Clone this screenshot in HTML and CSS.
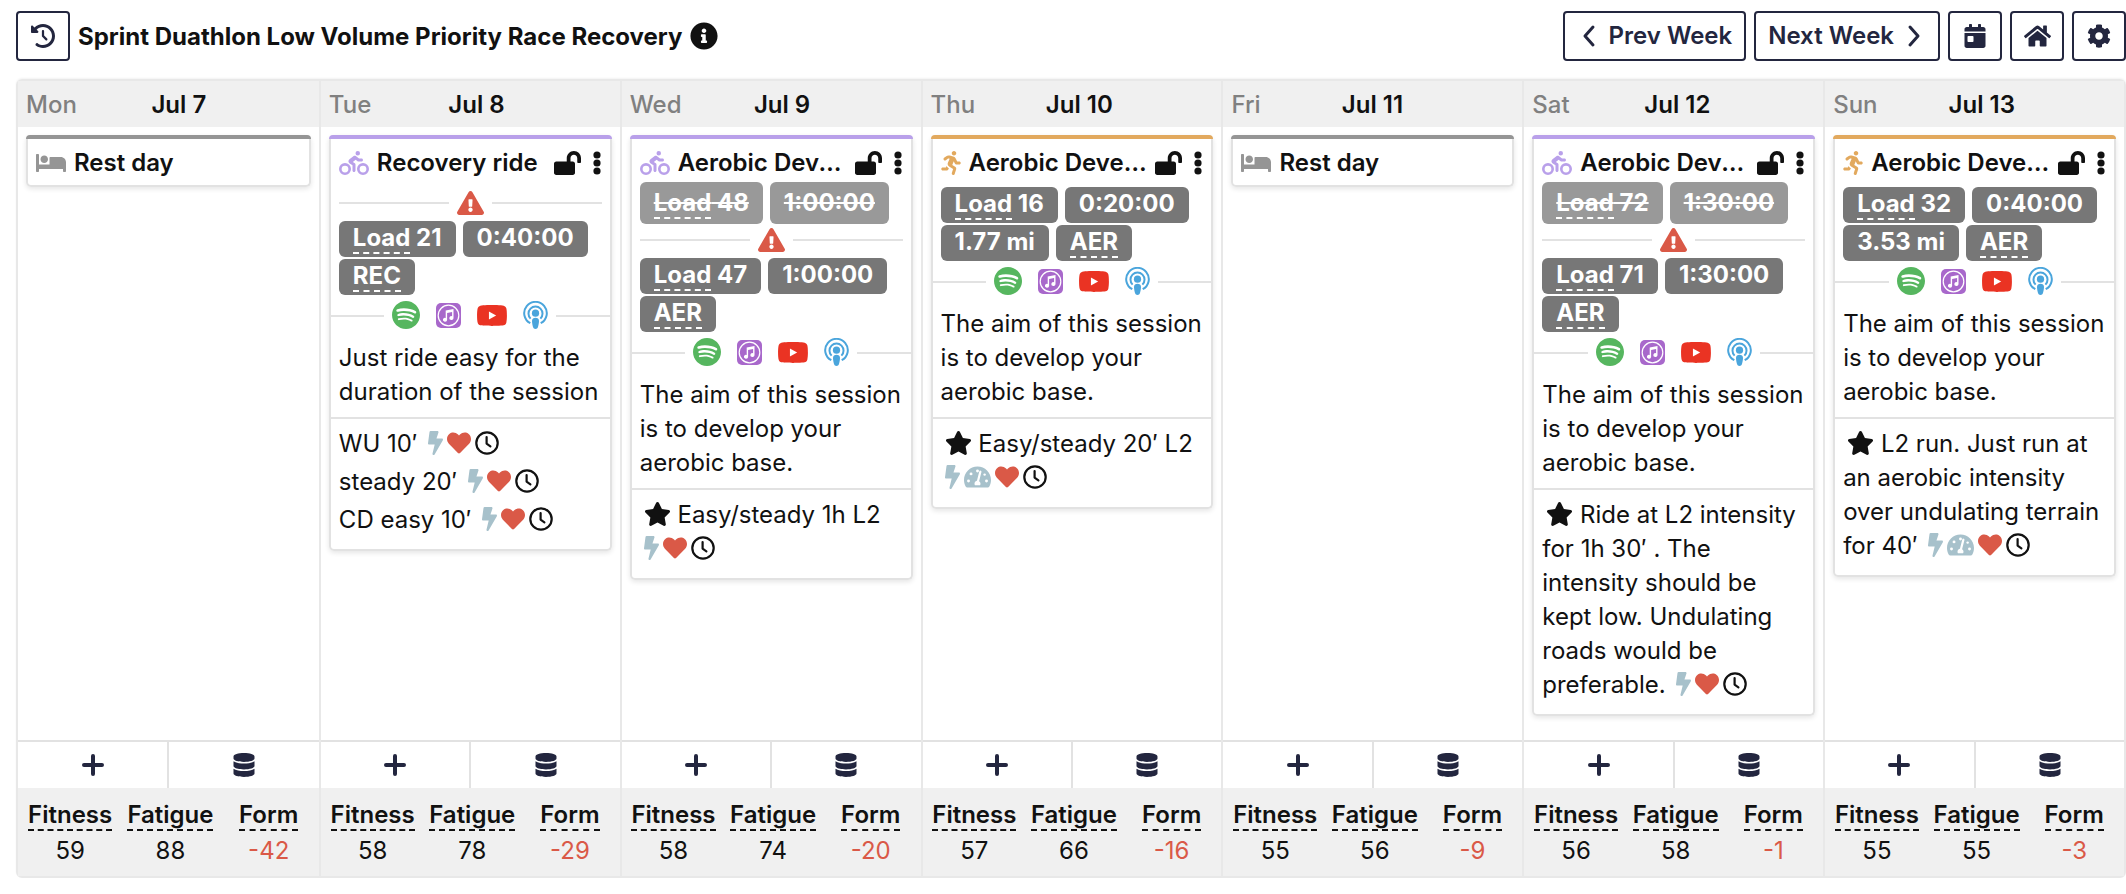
FILE: index.html
```html
<!DOCTYPE html>
<html lang="en">
<head>
    <meta charset="utf-8">
    <title>Training Week</title>
    <link rel="stylesheet" href="styles.css">
</head>
<body>
    <!-- icon sprite -->
    <svg class="sprite" aria-hidden="true">
        <symbol id="history" viewBox="0 0 512 512"><path d="M75 75L41 41C25.900 25.900 0 36.600 0 57.900V168c0 13.300 10.700 24 24 24H134.100c21.400 0 32.100-25.900 17-41l-30.800-30.800C155 85.500 203 64 256 64c106 0 192 86 192 192s-86 192-192 192c-40.800 0-78.600-12.700-109.700-34.400c-14.500-10.100-34.400-6.600-44.600 7.900s-6.600 34.400 7.900 44.600C151.200 495 201.700 512 256 512c141.400 0 256-114.600 256-256S397.400 0 256 0C185.300 0 121.300 28.700 75 75zm181 53c-13.300 0-24 10.700-24 24V256c0 6.400 2.500 12.500 7 17l72 72c9.400 9.400 24.600 9.400 33.900 0s9.400-24.600 0-33.900l-65-65V152c0-13.300-10.700-24-24-24z"/></symbol>
        <symbol id="info" viewBox="0 0 512 512"><path d="M256 8C119 8 8 119 8 256c0 137 111 248 248 248s248-111 248-248C504 119 393 8 256 8zm0 110c23.200 0 42 18.800 42 42s-18.800 42-42 42-42-18.800-42-42 18.800-42 42-42zm56 254c0 6.600-5.400 12-12 12h-88c-6.600 0-12-5.400-12-12v-24c0-6.600 5.400-12 12-12h12v-64h-12c-6.600 0-12-5.400-12-12v-24c0-6.600 5.400-12 12-12h64c6.600 0 12 5.400 12 12v100h12c6.600 0 12 5.400 12 12v24z"/></symbol>
        <symbol id="left" viewBox="0 0 24 24"><path d="M16 3L8 12l8 9" fill="none" stroke="currentColor" stroke-width="3" stroke-linecap="round" stroke-linejoin="round"/></symbol>
        <symbol id="right" viewBox="0 0 24 24"><path d="M8 3l8 9-8 9" fill="none" stroke="currentColor" stroke-width="3" stroke-linecap="round" stroke-linejoin="round"/></symbol>
        <symbol id="calendar" viewBox="0 0 448 512"><path d="M0 464c0 26.500 21.500 48 48 48h352c26.500 0 48-21.500 48-48V192H0v272zm64-192c0-8.800 7.200-16 16-16h96c8.800 0 16 7.200 16 16v96c0 8.800-7.200 16-16 16H80c-8.800 0-16-7.200-16-16v-96zM400 64h-48V16c0-8.800-7.200-16-16-16h-32c-8.800 0-16 7.200-16 16v48H160V16c0-8.800-7.200-16-16-16h-32c-8.800 0-16 7.200-16 16v48H48C21.500 64 0 85.500 0 112v48h448v-48c0-26.500-21.500-48-48-48z"/></symbol>
        <symbol id="home" viewBox="0 0 576 512"><path d="M280.370 148.260L96 300.110V464a16 16 0 0 0 16 16l112.060-.29a16 16 0 0 0 15.920-16V368a16 16 0 0 1 16-16h64a16 16 0 0 1 16 16v95.640a16 16 0 0 0 16 16.050L464 480a16 16 0 0 0 16-16V300L295.670 148.260a12.190 12.190 0 0 0-15.300 0zM571.600 251.470L488 182.560V44.050a12 12 0 0 0-12-12h-56a12 12 0 0 0-12 12v72.610L318.470 43a48 48 0 0 0-61 0L4.340 251.470a12 12 0 0 0-1.600 16.900l25.500 31A12 12 0 0 0 45.150 301l235.220-193.740a12.190 12.190 0 0 1 15.300 0L530.900 301a12 12 0 0 0 16.900-1.600l25.500-31a12 12 0 0 0-1.700-16.930z"/></symbol>
        <symbol id="cog" viewBox="0 0 512 512"><path d="M487.400 315.700l-42.600-24.600c4.300-23.200 4.300-47 0-70.200l42.600-24.600c4.900-2.800 7.100-8.600 5.500-14-11.100-35.600-30-67.800-54.700-94.600-3.800-4.100-10-5.100-14.800-2.300L380.800 110c-17.900-15.400-38.500-27.300-60.800-35.100V25.800c0-5.600-3.900-10.500-9.400-11.700-36.700-8.200-74.300-7.800-109.200 0-5.500 1.200-9.400 6.100-9.400 11.700V75c-22.200 7.900-42.800 19.800-60.800 35.100L88.700 85.500c-4.900-2.800-11-1.900-14.800 2.300-24.700 26.700-43.600 58.900-54.700 94.600-1.700 5.400.6 11.200 5.500 14L67.300 221c-4.300 23.200-4.300 47 0 70.200l-42.600 24.600c-4.900 2.800-7.100 8.600-5.500 14 11.100 35.600 30 67.800 54.700 94.600 3.800 4.100 10 5.100 14.800 2.300l42.600-24.600c17.900 15.400 38.500 27.300 60.800 35.100v49.200c0 5.600 3.900 10.500 9.400 11.700 36.700 8.200 74.300 7.800 109.200 0 5.500-1.200 9.400-6.100 9.400-11.700v-49.200c22.200-7.900 42.800-19.800 60.800-35.100l42.600 24.600c4.900 2.800 11 1.900 14.800-2.300 24.700-26.700 43.600-58.900 54.700-94.600 1.500-5.500-.7-11.300-5.600-14.100zM256 336c-44.100 0-80-35.900-80-80s35.900-80 80-80 80 35.900 80 80-35.900 80-80 80z"/></symbol>
        <symbol id="bed" viewBox="0 0 640 512"><path d="M176 256c44.110 0 80-35.890 80-80s-35.890-80-80-80-80 35.890-80 80 35.890 80 80 80zm352-128H304c-8.840 0-16 7.160-16 16v144H64V80c0-8.840-7.160-16-16-16H16C7.160 64 0 71.160 0 80v352c0 8.840 7.160 16 16 16h32c8.840 0 16-7.160 16-16v-48h512v48c0 8.840 7.160 16 16 16h32c8.840 0 16-7.160 16-16V240c0-61.860-50.140-112-112-112z"/></symbol>
        <symbol id="bike" viewBox="0 0 640 512"><path d="M400 96a48 48 0 1 0 0-96 48 48 0 1 0 0 96zm27.200 64l-61.800-48.800c-17.300-13.600-41.700-13.800-59.100-.3l-83.100 64.200c-30.700 23.800-28.500 70.800 4.300 91.600L288 305.100V416c0 17.700 14.300 32 32 32s32-14.300 32-32V288c0-10.700-5.300-20.700-14.200-26.600L295 232.900l60.300-48.500L396 217c5.700 4.500 12.700 7 20 7h64c17.700 0 32-14.300 32-32s-14.300-32-32-32H427.200zM56 384a72 72 0 1 1 144 0A72 72 0 1 1 56 384zm200 0A128 128 0 1 0 0 384a128 128 0 1 0 256 0zm184 0a72 72 0 1 1 144 0 72 72 0 1 1 -144 0zm200 0a128 128 0 1 0 -256 0 128 128 0 1 0 256 0z"/></symbol>
        <symbol id="run" viewBox="0 0 416 512"><path d="M272 96c26.510 0 48-21.490 48-48S298.510 0 272 0s-48 21.490-48 48 21.490 48 48 48zM113.690 317.470l-14.800 34.520H32c-17.670 0-32 14.330-32 32s14.330 32 32 32h77.450c19.250 0 36.580-11.440 44.110-29.090l8.790-20.520-10.670-6.300c-17.320-10.230-30.060-25.370-37.990-42.610zM384 223.990h-44.030l-26.060-53.250c-12.500-25.550-35.450-44.230-61.780-50.940l-71.080-21.140c-28.300-6.800-57.770-.55-80.840 17.140l-39.670 30.410c-14.030 10.750-16.690 30.830-5.940 44.860s30.840 16.660 44.860 5.910l39.690-30.410c7.670-5.890 17.440-8 25.270-6.140l14.700 4.370-37.460 87.390c-12.620 29.480-1.310 64.010 26.300 80.310l84.980 50.170-27.470 87.730c-5.280 16.860 4.110 34.820 20.970 40.090 3.190 1 6.410 1.480 9.580 1.480 13.610 0 26.230-8.770 30.520-22.450l31.640-101.060c5.910-20.770-2.890-43.080-21.640-54.390l-61.240-36.140 31.310-78.280 20.270 41.430c8 16.340 24.920 26.890 43.110 26.890H384c17.670 0 32-14.330 32-32s-14.330-31.990-32-31.990z"/></symbol>
        <symbol id="unlock" viewBox="0 0 576 512"><path d="M423.500 0C339.500.3 272 69.500 272 153.500V224H48c-26.500 0-48 21.500-48 48v192c0 26.500 21.500 48 48 48h352c26.500 0 48-21.500 48-48V272c0-26.500-21.500-48-48-48h-48v-71.100c0-39.600 31.700-72.500 71.300-72.900 40-.4 72.700 32.100 72.700 72v80c0 13.300 10.700 24 24 24h32c13.300 0 24-10.700 24-24v-80C576 68 507.500-.3 423.500 0z"/></symbol>
        <symbol id="dots" viewBox="0 0 8 24"><circle cx="4" cy="4" r="3.600"/><circle cx="4" cy="12" r="3.600"/><circle cx="4" cy="20" r="3.600"/></symbol>
        <symbol id="warning" viewBox="0 0 576 512"><path d="M569.500 440C588 472 564.800 512 527.900 512H48c-36.900 0-60-40-41.500-72L246.400 24c18.500-32 64.700-32 83.200 0l239.900 416zM288 354c-25.400 0-46 20.600-46 46s20.600 46 46 46 46-20.600 46-46-20.600-46-46-46zm-43.700-165.300l7.400 136c.4 6.300 5.700 11.300 12 11.300h48.600c6.400 0 11.600-5 12-11.300l7.400-136c.4-6.900-5.100-12.700-12-12.700h-63.400c-6.900 0-12.300 5.800-12 12.700z"/></symbol>
        <symbol id="spotify" viewBox="0 8 496 496"><path d="M248 8C111.100 8 0 119.100 0 256s111.100 248 248 248 248-111.100 248-248S384.900 8 248 8zm100.700 364.900c-4.200 0-6.800-1.300-10.700-3.600-62.400-37.600-135-39.200-206.700-24.500-3.900 1-9 2.600-11.900 2.600-9.700 0-15.800-7.700-15.800-15.800 0-10.300 6.100-15.200 13.600-16.800 81.900-18.100 165.600-16.500 237 26.200 6.100 3.900 9.700 7.400 9.700 16.500s-7.100 15.400-15.200 15.400zm26.900-65.600c-5.200 0-8.700-2.300-12.300-4.200-62.500-37-155.700-51.900-238.600-29.400-4.800 1.300-7.400 2.600-11.900 2.600-10.700 0-19.400-8.700-19.400-19.400s5.200-17.800 15.500-20.700c27.800-7.800 56.200-13.600 97.800-13.600 64.900 0 127.600 16.100 177 45.500 8.100 4.800 11.300 11 11.300 19.700-.1 10.800-8.500 19.500-19.400 19.500zm31-76.200c-5.200 0-8.400-1.300-12.900-3.900-71.200-42.500-198.500-52.700-280.900-29.700-3.600 1-8.100 2.600-12.900 2.600-13.200 0-23.300-10.300-23.300-23.600 0-13.600 8.400-21.300 17.400-23.900 35.200-10.300 74.600-15.200 117.500-15.200 73 0 149.500 15.200 205.400 47.800 7.800 4.500 12.900 10.700 12.900 22.600 0 13.600-11 23.300-23.200 23.300z"/></symbol>
        <symbol id="itunes" viewBox="0 0 25 25"><rect width="25" height="25" rx="5"/><circle cx="12.500" cy="12.500" r="10.300" fill="none" stroke="#fff" stroke-width="1.200"/><path d="M9.700 7.600l7.800-1.700v9.300a2.100 1.900 0 1 1-1.400-1.900V9l-5 1.100v6.800a2.100 1.900 0 1 1-1.400-1.900z" fill="#fff"/></symbol>
        <symbol id="youtube" viewBox="15 64 546 384"><path d="M549.700 124c-6.300-23.600-24.800-42.200-48.300-48.500C458.800 64 288 64 288 64S117.200 64 74.600 75.500C51.100 81.800 32.600 100.400 26.300 124c-11.400 43-11.400 132.400-11.400 132.400s0 89.400 11.400 132.300c6.300 23.600 24.800 41.500 48.300 47.800C117.200 448 288 448 288 448s170.800 0 213.400-11.500c23.500-6.300 42-24.200 48.300-47.800 11.400-42.900 11.400-132.300 11.400-132.300s0-89.400-11.400-132.400z"/><path d="M232 182l132 74-132 74z" fill="#fff"/></symbol>
        <symbol id="podcast" viewBox="0 0 25 28"><circle cx="12.500" cy="12.200" r="3.600"/><path d="M9 20c0-2.500 1.500-3.200 3.500-3.200s3.500.7 3.500 3.200c0 2-.6 4.500-1 6-.3 1.300-1.300 2-2.500 2s-2.200-.7-2.500-2c-.4-1.500-1-4-1-6z"/><path d="M7.600 17.600a7 7 0 1 1 9.800 0M7.300 22.200a11.300 11.300 0 1 1 10.400 0" fill="none" stroke="currentColor" stroke-width="2"/></symbol>
        <symbol id="bolt" viewBox="0 0 320 512"><path d="M296 160H180.600l42.600-129.800C227.200 15 215.700 0 200 0H56C44 0 33.800 8.900 32.200 20.800l-32 240C-1.700 275.200 9.500 288 24 288h118.700L96.600 482.500c-3.600 15.200 8 29.500 23.300 29.500 8.400 0 16.400-4.400 20.800-12l176-304c9.300-15.900-2.200-36-20.700-36z"/></symbol>
        <symbol id="heart" viewBox="0 0 512 512"><path d="M462.300 62.600C407.500 15.900 326 24.300 275.700 76.200L256 96.500l-19.700-20.300C186.100 24.300 104.500 15.900 49.700 62.600c-62.800 53.600-66.100 149.800-9.900 207.900l193.500 199.800c12.500 12.900 32.800 12.900 45.300 0l193.500-199.800c56.300-58.100 53-154.300-9.800-207.900z"/></symbol>
        <symbol id="clock" viewBox="0 0 24 24"><circle cx="12" cy="12" r="10.700" fill="none" stroke="currentColor" stroke-width="2.200"/><path d="M11.600 6v6.600l3.800 2.700" fill="none" stroke="currentColor" stroke-width="2.200" stroke-linecap="round" stroke-linejoin="round"/></symbol>
        <symbol id="gauge" viewBox="0 0 576 512"><path d="M288 32C129 32 0 161 0 320c0 52.800 14.200 102.300 39 144.800 5.700 9.600 16.400 15.200 27.500 15.200h443c11.100 0 21.800-5.600 27.400-15.200C561.800 422.300 576 372.800 576 320c0-159-129-288-288-288z"/><g fill="#fff"><circle cx="288" cy="128" r="31"/><circle cx="150" cy="190" r="31"/><circle cx="96" cy="340" r="31"/><circle cx="480" cy="340" r="31"/><circle cx="440" cy="205" r="26"/><path d="M356 120c13 4 20 17 16 30l-50 196c18 12 30 30 30 54 0 13-3 24-9 32H233c-6-8-9-19-9-32 0-36 24-62 52-64l50-198c4-13 17-22 30-18z"/></g></symbol>
        <symbol id="star" viewBox="0 0 576 512"><path d="M259.300 17.800L194 150.200 47.900 171.500c-26.200 3.800-36.700 36.100-17.700 54.600l105.700 103-25 145.500c-4.500 26.300 23.200 46 46.400 33.700L288 439.600l130.700 68.700c23.200 12.200 50.900-7.400 46.400-33.700l-25-145.500 105.700-103c19-18.500 8.500-50.800-17.700-54.600L382 150.200 316.700 17.800c-11.700-23.600-45.600-23.900-57.400 0z"/></symbol>
        <symbol id="plus" viewBox="0 0 24 24"><path d="M12 3v18M3 12h18" fill="none" stroke="currentColor" stroke-width="4" stroke-linecap="round"/></symbol>
        <symbol id="database" viewBox="0 0 448 512"><path d="M448 73.100v45.800C448 159.100 347.700 192 224 192S0 159.100 0 118.900V73.100C0 32.900 100.300 0 224 0s224 32.900 224 73.100zM448 176v102.900C448 319.100 347.700 352 224 352S0 319.100 0 278.900V176c48.100 33.100 136.200 48.600 224 48.600S399.900 209.100 448 176zm0 160v102.900C448 479.100 347.700 512 224 512S0 479.100 0 438.900V336c48.100 33.100 136.200 48.600 224 48.600S399.900 369.100 448 336z"/></symbol>
    </svg>

    <header class="toolbar">
        <button class="btn square" aria-label="History"><svg class="icon"><use href="#history"/></svg></button>
        <h1>Sprint Duathlon Low Volume Priority Race Recovery</h1>
        <svg class="icon info"><use href="#info"/></svg>
        <div class="actions">
            <button class="btn"><svg class="icon"><use href="#left"/></svg>Prev Week</button>
            <button class="btn">Next Week<svg class="icon"><use href="#right"/></svg></button>
            <button class="btn square" aria-label="Today"><svg class="icon"><use href="#calendar"/></svg></button>
            <button class="btn square" aria-label="Home"><svg class="icon wide"><use href="#home"/></svg></button>
            <button class="btn square" aria-label="Settings"><svg class="icon"><use href="#cog"/></svg></button>
        </div>
    </header>

    <main class="week">
        <section class="day">
            <div class="day-header"><span class="weekday">Mon</span><span class="date">Jul 7</span></div>
            <div class="day-body">
                <article class="card rest">
                    <div class="card-title"><svg class="sport"><use href="#bed"/></svg><h2>Rest day</h2></div>
                </article>
            </div>
            <div class="day-actions">
                <button aria-label="Add"><svg class="icon"><use href="#plus"/></svg></button>
                <button aria-label="Data"><svg class="icon"><use href="#database"/></svg></button>
            </div>
            <dl class="stats">
                <div><dt><abbr>Fitness</abbr></dt><dd>59</dd></div>
                <div><dt><abbr>Fatigue</abbr></dt><dd>88</dd></div>
                <div><dt><abbr>Form</abbr></dt><dd class="negative">-42</dd></div>
            </dl>
        </section>

        <section class="day">
            <div class="day-header"><span class="weekday">Tue</span><span class="date">Jul 8</span></div>
            <div class="day-body">
                <article class="card bike">
                    <div class="card-title">
                        <svg class="sport"><use href="#bike"/></svg><h2>Recovery ride</h2>
                        <button class="lock" aria-label="Unlocked"><svg><use href="#unlock"/></svg></button>
                        <button class="more" aria-label="More"><svg><use href="#dots"/></svg></button>
                    </div>
                    <div class="meta">
                        <div class="warn"><svg><use href="#warning"/></svg></div>
                        <div class="badges"><span class="badge"><abbr>Load</abbr> 21</span><span class="badge">0:40:00</span><span class="badge"><abbr>REC</abbr></span></div>
                    </div>
                    <div class="media">
                        <a href="#" class="spotify" aria-label="Spotify"><svg><use href="#spotify"/></svg></a>
                        <a href="#" class="itunes" aria-label="iTunes"><svg><use href="#itunes"/></svg></a>
                        <a href="#" class="youtube" aria-label="YouTube"><svg><use href="#youtube"/></svg></a>
                        <a href="#" class="podcast" aria-label="Podcasts"><svg><use href="#podcast"/></svg></a>
                    </div>
                    <p class="description">Just ride easy for the duration of the session</p>
                    <ul class="steps">
                        <li>WU 10′ <span class="targets"><svg class="bolt"><use href="#bolt"/></svg><svg class="heart"><use href="#heart"/></svg><svg class="clock"><use href="#clock"/></svg></span></li>
                        <li>steady 20′ <span class="targets"><svg class="bolt"><use href="#bolt"/></svg><svg class="heart"><use href="#heart"/></svg><svg class="clock"><use href="#clock"/></svg></span></li>
                        <li>CD easy 10′ <span class="targets"><svg class="bolt"><use href="#bolt"/></svg><svg class="heart"><use href="#heart"/></svg><svg class="clock"><use href="#clock"/></svg></span></li>
                    </ul>
                </article>
            </div>
            <div class="day-actions">
                <button aria-label="Add"><svg class="icon"><use href="#plus"/></svg></button>
                <button aria-label="Data"><svg class="icon"><use href="#database"/></svg></button>
            </div>
            <dl class="stats">
                <div><dt><abbr>Fitness</abbr></dt><dd>58</dd></div>
                <div><dt><abbr>Fatigue</abbr></dt><dd>78</dd></div>
                <div><dt><abbr>Form</abbr></dt><dd class="negative">-29</dd></div>
            </dl>
        </section>

        <section class="day">
            <div class="day-header"><span class="weekday">Wed</span><span class="date">Jul 9</span></div>
            <div class="day-body">
                <article class="card bike">
                    <div class="card-title">
                        <svg class="sport"><use href="#bike"/></svg><h2>Aerobic Development</h2>
                        <button class="lock" aria-label="Unlocked"><svg><use href="#unlock"/></svg></button>
                        <button class="more" aria-label="More"><svg><use href="#dots"/></svg></button>
                    </div>
                    <div class="meta changed">
                        <div class="badges old"><span class="badge"><abbr>Load</abbr> 48</span><span class="badge">1:00:00</span></div>
                        <div class="warn"><svg><use href="#warning"/></svg></div>
                        <div class="badges"><span class="badge"><abbr>Load</abbr> 47</span><span class="badge">1:00:00</span><span class="badge"><abbr>AER</abbr></span></div>
                    </div>
                    <div class="media">
                        <a href="#" class="spotify" aria-label="Spotify"><svg><use href="#spotify"/></svg></a>
                        <a href="#" class="itunes" aria-label="iTunes"><svg><use href="#itunes"/></svg></a>
                        <a href="#" class="youtube" aria-label="YouTube"><svg><use href="#youtube"/></svg></a>
                        <a href="#" class="podcast" aria-label="Podcasts"><svg><use href="#podcast"/></svg></a>
                    </div>
                    <p class="description">The aim of this session is to develop your aerobic base.</p>
                    <ul class="steps">
                        <li><svg class="star"><use href="#star"/></svg> Easy/steady 1h L2 <span class="targets"><svg class="bolt"><use href="#bolt"/></svg><svg class="heart"><use href="#heart"/></svg><svg class="clock"><use href="#clock"/></svg></span></li>
                    </ul>
                </article>
            </div>
            <div class="day-actions">
                <button aria-label="Add"><svg class="icon"><use href="#plus"/></svg></button>
                <button aria-label="Data"><svg class="icon"><use href="#database"/></svg></button>
            </div>
            <dl class="stats">
                <div><dt><abbr>Fitness</abbr></dt><dd>58</dd></div>
                <div><dt><abbr>Fatigue</abbr></dt><dd>74</dd></div>
                <div><dt><abbr>Form</abbr></dt><dd class="negative">-20</dd></div>
            </dl>
        </section>

        <section class="day">
            <div class="day-header"><span class="weekday">Thu</span><span class="date">Jul 10</span></div>
            <div class="day-body">
                <article class="card run">
                    <div class="card-title">
                        <svg class="sport"><use href="#run"/></svg><h2>Aerobic Development</h2>
                        <button class="lock" aria-label="Unlocked"><svg><use href="#unlock"/></svg></button>
                        <button class="more" aria-label="More"><svg><use href="#dots"/></svg></button>
                    </div>
                    <div class="meta">
                        <div class="badges"><span class="badge"><abbr>Load</abbr> 16</span><span class="badge">0:20:00</span><span class="badge">1.77 mi</span><span class="badge"><abbr>AER</abbr></span></div>
                    </div>
                    <div class="media">
                        <a href="#" class="spotify" aria-label="Spotify"><svg><use href="#spotify"/></svg></a>
                        <a href="#" class="itunes" aria-label="iTunes"><svg><use href="#itunes"/></svg></a>
                        <a href="#" class="youtube" aria-label="YouTube"><svg><use href="#youtube"/></svg></a>
                        <a href="#" class="podcast" aria-label="Podcasts"><svg><use href="#podcast"/></svg></a>
                    </div>
                    <p class="description">The aim of this session is to develop your aerobic base.</p>
                    <ul class="steps">
                        <li><svg class="star"><use href="#star"/></svg> Easy/steady 20′ L2 <span class="targets"><svg class="bolt"><use href="#bolt"/></svg><svg class="gauge"><use href="#gauge"/></svg><svg class="heart"><use href="#heart"/></svg><svg class="clock"><use href="#clock"/></svg></span></li>
                    </ul>
                </article>
            </div>
            <div class="day-actions">
                <button aria-label="Add"><svg class="icon"><use href="#plus"/></svg></button>
                <button aria-label="Data"><svg class="icon"><use href="#database"/></svg></button>
            </div>
            <dl class="stats">
                <div><dt><abbr>Fitness</abbr></dt><dd>57</dd></div>
                <div><dt><abbr>Fatigue</abbr></dt><dd>66</dd></div>
                <div><dt><abbr>Form</abbr></dt><dd class="negative">-16</dd></div>
            </dl>
        </section>

        <section class="day">
            <div class="day-header"><span class="weekday">Fri</span><span class="date">Jul 11</span></div>
            <div class="day-body">
                <article class="card rest">
                    <div class="card-title"><svg class="sport"><use href="#bed"/></svg><h2>Rest day</h2></div>
                </article>
            </div>
            <div class="day-actions">
                <button aria-label="Add"><svg class="icon"><use href="#plus"/></svg></button>
                <button aria-label="Data"><svg class="icon"><use href="#database"/></svg></button>
            </div>
            <dl class="stats">
                <div><dt><abbr>Fitness</abbr></dt><dd>55</dd></div>
                <div><dt><abbr>Fatigue</abbr></dt><dd>56</dd></div>
                <div><dt><abbr>Form</abbr></dt><dd class="negative">-9</dd></div>
            </dl>
        </section>

        <section class="day">
            <div class="day-header"><span class="weekday">Sat</span><span class="date">Jul 12</span></div>
            <div class="day-body">
                <article class="card bike">
                    <div class="card-title">
                        <svg class="sport"><use href="#bike"/></svg><h2>Aerobic Development</h2>
                        <button class="lock" aria-label="Unlocked"><svg><use href="#unlock"/></svg></button>
                        <button class="more" aria-label="More"><svg><use href="#dots"/></svg></button>
                    </div>
                    <div class="meta changed">
                        <div class="badges old"><span class="badge"><abbr>Load</abbr> 72</span><span class="badge">1:30:00</span></div>
                        <div class="warn"><svg><use href="#warning"/></svg></div>
                        <div class="badges"><span class="badge"><abbr>Load</abbr> 71</span><span class="badge">1:30:00</span><span class="badge"><abbr>AER</abbr></span></div>
                    </div>
                    <div class="media">
                        <a href="#" class="spotify" aria-label="Spotify"><svg><use href="#spotify"/></svg></a>
                        <a href="#" class="itunes" aria-label="iTunes"><svg><use href="#itunes"/></svg></a>
                        <a href="#" class="youtube" aria-label="YouTube"><svg><use href="#youtube"/></svg></a>
                        <a href="#" class="podcast" aria-label="Podcasts"><svg><use href="#podcast"/></svg></a>
                    </div>
                    <p class="description">The aim of this session is to develop your aerobic base.</p>
                    <ul class="steps">
                        <li><svg class="star"><use href="#star"/></svg> Ride at L2 intensity for 1h 30′ . The intensity should be kept low. Undulating roads would be preferable. <span class="targets"><svg class="bolt"><use href="#bolt"/></svg><svg class="heart"><use href="#heart"/></svg><svg class="clock"><use href="#clock"/></svg></span></li>
                    </ul>
                </article>
            </div>
            <div class="day-actions">
                <button aria-label="Add"><svg class="icon"><use href="#plus"/></svg></button>
                <button aria-label="Data"><svg class="icon"><use href="#database"/></svg></button>
            </div>
            <dl class="stats">
                <div><dt><abbr>Fitness</abbr></dt><dd>56</dd></div>
                <div><dt><abbr>Fatigue</abbr></dt><dd>58</dd></div>
                <div><dt><abbr>Form</abbr></dt><dd class="negative">-1</dd></div>
            </dl>
        </section>

        <section class="day">
            <div class="day-header"><span class="weekday">Sun</span><span class="date">Jul 13</span></div>
            <div class="day-body">
                <article class="card run">
                    <div class="card-title">
                        <svg class="sport"><use href="#run"/></svg><h2>Aerobic Development</h2>
                        <button class="lock" aria-label="Unlocked"><svg><use href="#unlock"/></svg></button>
                        <button class="more" aria-label="More"><svg><use href="#dots"/></svg></button>
                    </div>
                    <div class="meta">
                        <div class="badges"><span class="badge"><abbr>Load</abbr> 32</span><span class="badge">0:40:00</span><span class="badge">3.53 mi</span><span class="badge"><abbr>AER</abbr></span></div>
                    </div>
                    <div class="media">
                        <a href="#" class="spotify" aria-label="Spotify"><svg><use href="#spotify"/></svg></a>
                        <a href="#" class="itunes" aria-label="iTunes"><svg><use href="#itunes"/></svg></a>
                        <a href="#" class="youtube" aria-label="YouTube"><svg><use href="#youtube"/></svg></a>
                        <a href="#" class="podcast" aria-label="Podcasts"><svg><use href="#podcast"/></svg></a>
                    </div>
                    <p class="description">The aim of this session is to develop your aerobic base.</p>
                    <ul class="steps">
                        <li><svg class="star"><use href="#star"/></svg> L2 run. Just run at an aerobic intensity over undulating terrain for 40′ <span class="targets"><svg class="bolt"><use href="#bolt"/></svg><svg class="gauge"><use href="#gauge"/></svg><svg class="heart"><use href="#heart"/></svg><svg class="clock"><use href="#clock"/></svg></span></li>
                    </ul>
                </article>
            </div>
            <div class="day-actions">
                <button aria-label="Add"><svg class="icon"><use href="#plus"/></svg></button>
                <button aria-label="Data"><svg class="icon"><use href="#database"/></svg></button>
            </div>
            <dl class="stats">
                <div><dt><abbr>Fitness</abbr></dt><dd>55</dd></div>
                <div><dt><abbr>Fatigue</abbr></dt><dd>55</dd></div>
                <div><dt><abbr>Form</abbr></dt><dd class="negative">-3</dd></div>
            </dl>
        </section>
    </main>
</body>
</html>
```
FILE: styles.css
```css
* {
    box-sizing: border-box;
}
body {
    margin: 0;
    padding: 11px 0 14px 16px;
    background: #fff;
    color: #111;
    font-family: Inter, "Liberation Sans", sans-serif;
    font-size: 24px;
    line-height: 34px;
}
h1, h2, p, ul, dl, dd {
    margin: 0;
    padding: 0;
    font-size: 24px;
}
svg {
    fill: currentColor;
}
button {
    padding: 0;
    border: none;
    background: none;
    color: inherit;
    font: inherit;
    cursor: pointer;
}
.sprite {
    display: none;
}
.icon {
    width: 24px;
    height: 24px;
}
.icon.wide {
    width: 27px;
}

/* toolbar */
.toolbar {
    display: flex;
    align-items: center;
    gap: 8px;
    margin-bottom: 18px;
}
.toolbar h1 {
    padding-top: 2px;
    font-weight: 700;
}
.info {
    width: 28px;
    height: 28px;
}
.actions {
    display: flex;
    gap: 8px;
    margin-left: auto;
}
.btn {
    display: flex;
    align-items: center;
    justify-content: center;
    gap: 8px;
    height: 50px;
    padding: 0 12px;
    border: 2px solid #23263f;
    border-radius: 4px;
    color: #23263f;
    font-weight: 600;
}
.btn.square {
    width: 54px;
    padding: 0;
}

/* week grid */
.week {
    display: grid;
    grid-template-columns: repeat(7, minmax(0, 1fr));
    border: 2px solid #e8e8e8;
    border-radius: 6px;
    box-shadow: 0 -1px 2px rgba(0, 0, 0, 0.05);
}
.day {
    display: flex;
    flex-direction: column;
}
.day + .day {
    border-left: 2px solid #e8e8e8;
}
.day-header {
    display: flex;
    align-items: center;
    height: 46px;
    padding: 2px 38px 0 8px;
    background: #f0f0f0;
}
.weekday {
    color: #808080;
    font-weight: 500;
}
.date {
    flex: 1;
    text-align: center;
    font-weight: 600;
}
.day-body {
    flex: 1;
    padding: 8px 8px 24px;
}

/* workout card */
.card {
    border: 2px solid #e2e2e2;
    border-top: none;
    border-radius: 5px;
    box-shadow: 0 2px 5px rgba(0, 0, 0, 0.1);
}
.card::before {
    content: "";
    display: block;
    height: 4px;
    margin: 0 -2px;
    border-radius: 5px 5px 0 0;
    background: currentColor;
}
.rest::before, .rest .sport {
    color: #959595;
}
.bike::before, .bike .sport {
    color: #b9a0ea;
}
.run::before, .run .sport {
    color: #e2a95e;
}
.card-title {
    display: flex;
    align-items: center;
    height: 43px;
    padding: 5px 9px 0 8px;
}
.rest .card-title {
    height: 46px;
    padding-top: 2px;
}
.card-title svg {
    display: block;
    height: 24px;
}
.card-title .sport {
    flex: none;
    width: 30px;
    margin-right: 8px;
}
.run .card-title .sport {
    width: 20px;
}
.card-title h2 {
    flex: 1;
    overflow: hidden;
    font-weight: 600;
    white-space: nowrap;
    text-overflow: ellipsis;
}
.lock {
    margin: 0 12px 0 8px;
}
.lock svg {
    width: 27px;
}
.more svg {
    width: 8px;
}
.meta {
    padding: 5px 8px 0;
}
.meta.changed {
    padding-top: 0;
}
.badges {
    display: flex;
    flex-wrap: wrap;
    gap: 2px 7px;
}
.badge {
    height: 36px;
    padding: 0 14px;
    border-radius: 6px;
    background: #777;
    color: #fff;
    font-weight: 700;
    line-height: 33px;
}
.old .badge {
    height: 42px;
    background: #999;
    line-height: 42px;
    text-decoration: line-through;
}
abbr {
    border-bottom: 2px dashed currentColor;
}
.warn {
    display: flex;
    align-items: center;
    gap: 8px;
    height: 34px;
    padding-bottom: 2px;
}
.warn svg {
    width: 27px;
    height: 24px;
    color: #da5947;
}
.warn::before, .warn::after, .media::before, .media::after {
    content: "";
    flex: 1;
    height: 2px;
    background: #e2e2e2;
}
.media {
    display: flex;
    align-items: center;
    gap: 16px;
    height: 38px;
    padding-top: 4px;
}
.media::before {
    margin-right: -8px;
}
.media::after {
    margin-left: -8px;
}
.media a {
    padding-bottom: 2px;
}
.media svg {
    display: block;
    width: 28px;
    height: 28px;
}
.spotify {
    color: #56b65f;
}
.itunes {
    color: #a868cb;
}
.media .itunes svg {
    width: 25px;
    height: 25px;
}
.youtube {
    color: #ea3323;
}
.media .youtube svg {
    width: 30px;
    height: 21px;
}
.podcast {
    color: #4aa5dc;
}
.media .podcast svg {
    width: 25px;
}
.description {
    padding: 8px;
}
.steps {
    padding: 6px 8px 10px;
    border-top: 2px solid #e2e2e2;
    list-style: none;
}
.steps li {
    padding: 2px 0;
}
.steps svg {
    width: 24px;
    height: 24px;
    margin-left: 4px;
    vertical-align: -3px;
}
.targets {
    white-space: nowrap;
}
.steps .bolt {
    width: 15px;
    color: #a7c1cb;
}
.steps .gauge {
    width: 27px;
    color: #a7c1cb;
}
.steps .star {
    width: 27px;
}
.heart {
    color: #da5947;
}

/* column footer */
.day-actions {
    display: flex;
    height: 48px;
    border-top: 2px solid #e2e2e2;
}
.day-actions button {
    flex: 1;
    display: flex;
    align-items: center;
    justify-content: center;
    color: #23263f;
}
.day-actions button + button {
    border-left: 2px solid #e2e2e2;
}
.stats {
    display: grid;
    grid-template-columns: 104fr 96fr 100fr;
    padding: 10px 0 8px;
    background: #f0f0f0;
    text-align: center;
}
.stats dt {
    font-weight: 600;
}
.stats dd {
    padding-top: 2px;
}
.negative {
    color: #da5947;
}
```
